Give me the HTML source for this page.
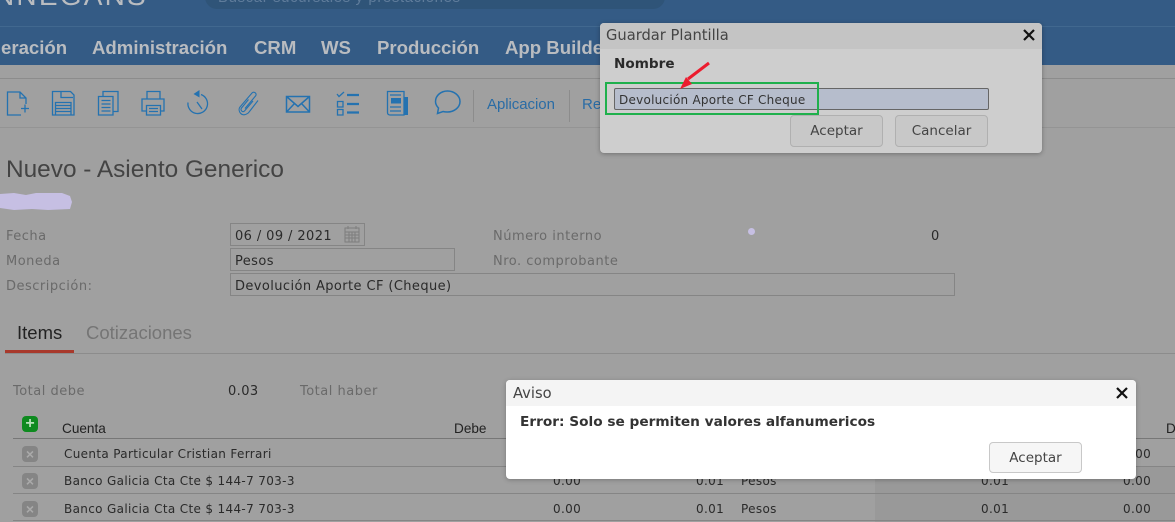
<!DOCTYPE html>
<html lang="es"><head><meta charset="utf-8"><title>Nuevo - Asiento Generico</title>
<style>
html,body{margin:0;padding:0}
html{background:#a0a0a0;overflow:hidden}
body{width:1175px;height:522px;position:relative;overflow:hidden;background:#a0a0a0;font-family:"DejaVu Sans",sans-serif;color:#222;filter:blur(.35px)}
.t{position:absolute;white-space:nowrap;line-height:1}
.l{font-family:"Liberation Sans",sans-serif}
.b{position:absolute;box-sizing:border-box}
.lab{font-size:13px;letter-spacing:.5px;color:#6a6a6a}
.val{font-size:13px;letter-spacing:.4px;color:#2a2a2a}
.nav{font:bold 18.6px "Liberation Sans",sans-serif;color:#b9bcc0;top:37px}
.hl{position:absolute;left:13px;width:1162px;height:1px;background:#858585}
.x{position:absolute;left:22px;width:16px;height:16px;border-radius:4px;background:#858585;color:#aaa;font:bold 14px/16px "Liberation Sans",sans-serif;text-align:center}
.c{font-size:12px;letter-spacing:.34px;color:#2a2a2a}
.btn{position:absolute;box-sizing:border-box;border-radius:4px;text-align:center;font-size:13.5px}
svg{position:absolute;fill:none;stroke:#2472b0;stroke-width:1.3}
</style></head><body>
<div class="b" style="left:0;top:0;width:1175px;height:65px;background:#345b85"></div>
<div class="b" style="left:0;top:26px;width:1175px;height:1px;background:#41688f"></div>
<div class="b" style="left:205px;top:-20px;width:460px;height:29px;border-radius:12px;background:#2f5478"></div>
<div class="t l" style="left:-6px;top:-18px;font-size:28px;letter-spacing:2.2px;color:#b9bcc0">NNEGANS</div>
<div class="t l" style="left:218px;top:-10px;font-size:15px;letter-spacing:.6px;color:#5f7c9b">Buscar sucursales y prestaciones</div>
<div class="t nav" style="left:1px">eración</div>
<div class="t nav" style="left:92px">Administración</div>
<div class="t nav" style="left:254px">CRM</div>
<div class="t nav" style="left:321px">WS</div>
<div class="t nav" style="left:377px">Producción</div>
<div class="t nav" style="left:505px">App Builder</div>
<div class="b" style="left:0;top:78px;width:1175px;height:1px;background:#8c8c8c"></div>
<div class="b" style="left:0;top:127px;width:1175px;height:1px;background:#949494"></div>
<svg style="left:0;top:0" width="480" height="130" viewBox="0 0 480 130">
<path d="M26 104V98l-6-6H7.500v23H21M20 92v6h6M21 108.500h8M25 104.500v8"/>
<path d="M52.500 91.500h18l3.500 3.500v20H52.500zM61 91.500v6h12M55.500 114.500v-12h15.500v12M55.500 105.500h15.500M55.500 108.500h15.500M55.500 111.500h15.500"/>
<path d="M103 96v-4.500h15v20h-5M98.500 96.500h14.500v18.500H98.500zM101.500 100.500h9M101.500 104h9M101.500 107.500h9M101.500 111h9"/>
<path d="M147 99v-7.500h13V99M146 111h-4v-12h22v12h-3M146.500 105.500h14v9.500h-14zM149 108.500h9M149 111.500h9"/>
<path d="M201 94.500a9.800 9.800 0 1 1-13 8M197 102l5 7"/><path d="M199.500 90v7.500l-6-3.500z" fill="#2472b0" stroke="none"/>
<path d="M245 108.500l10.500-12.500c2-2.500-1.500-5-3.500-3l-12 14c-2.500 3 .5 9 5.500 7.500 1.500-.5 3-1.500 4-3l8.500-11M248.500 99.500l-7 8.500c-1.500 2 1 5 3 3l8.500-10" stroke-width="1.1"/>
<path d="M286.500 96.500h23v15.500h-23zM286.500 96.500l11.500 10 11.500-10M286.500 112l8-8.500M309.500 112l-8-8.500" stroke-width="1.5"/>
<path d="M337 94l2 2.500 5-4.500M337.500 101.500h5.500v5.500h-5.500zM337.500 109.500h5.500v5.500h-5.500z"/>
<path d="M347 95h12M347 104h12M347 112.500h12" stroke-width="2.200"/>
<path d="M387.500 91.500h16.500v23.500h-14c-1.500 0-2.500-1-2.500-2.500zM390 95h11M390 107h11M390 111h11"/>
<path d="M391 98h10v5.500h-10zM404 97h4v18h-4z" fill="#2472b0" stroke="none"/>
<path d="M438.500 108c-2-2-3-4-3-6.500 0-6 5.500-10.500 12-10.500s12.500 4.500 12.500 10.500-6 10.500-12.500 10.500c-1.500 0-3 0-4.500-.5l-5.500 2z" stroke-width="1.500"/>
</svg>
<div class="b" style="left:473px;top:90px;width:1px;height:32px;background:#8c8c8c"></div>
<div class="b" style="left:569px;top:90px;width:1px;height:32px;background:#8c8c8c"></div>
<div class="t l" style="left:487px;top:97px;font-size:15px;letter-spacing:-.05px;color:#2a6ca5">Aplicacion</div>
<div class="t l" style="left:582px;top:97px;font-size:15px;color:#2a6ca5">Re</div>

<div class="t l" style="left:6px;top:158px;font-size:24.4px;color:#444">Nuevo - Asiento Generico</div>
<svg style="left:0;top:190px;stroke:none" width="76" height="24"><path d="M0 4l14-1 12 2 10-2 26 0 8 3 2 6-2 7-22 1-16-1-18 1-14-2z" fill="#c6bfe3"/></svg>
<div class="b" style="left:748px;top:228px;width:7px;height:7px;border-radius:50%;background:#c6bfe3"></div>

<div class="t lab" style="left:6px;top:230px">Fecha</div>
<div class="t lab" style="left:6px;top:255px">Moneda</div>
<div class="t lab" style="left:6px;top:280px">Descripción:</div>
<div class="b" style="left:230px;top:223px;width:135px;height:23px;border:1px solid #858585"></div>
<div class="b" style="left:230px;top:248px;width:225px;height:23px;border:1px solid #858585"></div>
<div class="b" style="left:230px;top:273px;width:725px;height:23px;border:1px solid #858585"></div>
<div class="t val" style="left:235px;top:230px">06 / 09 / 2021</div>
<svg style="left:343px;top:225px;stroke:#7d7d7d;stroke-width:1" width="18" height="18"><path d="M2 3h14v14H2zM2 7h14M5 1v3M13 1v3M2 10h14M2 13h14M6 7v10M9 7v10M12 7v10"/></svg>
<div class="t val" style="left:235px;top:255px">Pesos</div>
<div class="t val" style="left:235px;top:280px">Devolución Aporte CF (Cheque)</div>
<div class="t lab" style="left:493px;top:230px">Número interno</div>
<div class="t lab" style="left:493px;top:255px">Nro. comprobante</div>
<div class="t val" style="left:931px;top:230px">0</div>

<div class="t l" style="left:17px;top:324px;font-size:18.5px;color:#222">Items</div>
<div class="t l" style="left:86px;top:324px;font-size:18.5px;color:#757575">Cotizaciones</div>
<div class="b" style="left:5px;top:350px;width:69px;height:3px;background:#a8392c"></div>
<div class="b" style="left:5px;top:353px;width:1170px;height:1px;background:#8c8c8c"></div>

<div class="t lab" style="left:13px;top:385px">Total debe</div>
<div class="t val" style="left:228px;top:385px">0.03</div>
<div class="t lab" style="left:300px;top:385px">Total haber</div>

<div class="b" style="left:22px;top:416px;width:16px;height:16px;border-radius:4px;background:#0e8a1f;color:#b5dfb8;font:bold 16px/15px 'Liberation Sans',sans-serif;text-align:center">+</div>
<div class="t l" style="left:62px;top:422px;font-size:13.6px;color:#222">Cuenta</div>
<div class="t l" style="left:454px;top:422px;font-size:13.6px;color:#222">Debe</div>
<div class="t l" style="left:1166px;top:422px;font-size:13.6px;color:#222">D</div>
<div class="b" style="left:875px;top:466px;width:300px;height:56px;background:#999"></div>
<div class="hl" style="top:438px;height:1px;background:#777"></div>
<div class="hl" style="top:466px"></div>
<div class="hl" style="top:493px"></div>
<div class="hl" style="top:520px"></div>
<div class="x" style="top:446px">×</div>
<div class="x" style="top:473px">×</div>
<div class="x" style="top:501px">×</div>
<div class="t c" style="left:64px;top:448px">Cuenta Particular Cristian Ferrari</div>
<div class="t c" style="left:64px;top:475px">Banco Galicia Cta Cte $ 144-7 703-3</div>
<div class="t c" style="left:64px;top:503px">Banco Galicia Cta Cte $ 144-7 703-3</div>
<div class="t c" style="left:553px;top:475px">0.00</div><div class="t c" style="left:696px;top:475px">0.01</div><div class="t c" style="left:741px;top:475px">Pesos</div><div class="t c" style="left:981px;top:475px">0.01</div><div class="t c" style="left:1123px;top:475px">0.00</div>
<div class="t c" style="left:553px;top:503px">0.00</div><div class="t c" style="left:696px;top:503px">0.01</div><div class="t c" style="left:741px;top:503px">Pesos</div><div class="t c" style="left:981px;top:503px">0.01</div><div class="t c" style="left:1123px;top:503px">0.00</div>
<div class="t c" style="left:1123px;top:448px">0.00</div>

<div class="b" style="left:600px;top:23px;width:442px;height:130px;border-radius:4px;background:#cecece;box-shadow:0 1px 5px rgba(0,0,0,.3)"></div>
<div class="b" style="left:600px;top:23px;width:442px;height:26px;border-radius:4px 4px 0 0;background:#c4c4c4"></div>
<div class="t" style="left:606px;top:29px;font-size:14.7px;color:#444">Guardar Plantilla</div>
<svg style="left:1022px;top:28px;stroke:#111;stroke-width:2.2" width="14" height="14"><path d="M2 2l10 10M12 2L2 12"/></svg>
<div class="t" style="left:614px;top:58px;font-size:13.6px;font-weight:bold;color:#2a2a2a">Nombre</div>
<div class="b" style="left:614px;top:88px;width:375px;height:22px;border:1px solid #666;border-radius:2px;background:#b6bdcc"></div>
<div class="t" style="left:619px;top:94px;font-size:12px;letter-spacing:.25px;color:#333">Devolución Aporte CF Cheque</div>
<div class="b" style="left:605px;top:82px;width:214px;height:33px;border:2px solid #1fb04c"></div>
<svg style="left:678px;top:60px;stroke:#ec1c2e;stroke-width:3" width="34" height="32"><path d="M31 3L10 19"/><path d="M2 29l12-5-6-7z" fill="#ec1c2e" stroke="none"/></svg>
<div class="btn" style="left:790px;top:115px;width:93px;height:32px;line-height:31px;background:#c8c8c8;border:1px solid #b0b0b0;color:#444">Aceptar</div>
<div class="btn" style="left:895px;top:115px;width:93px;height:32px;line-height:31px;background:#c8c8c8;border:1px solid #b0b0b0;color:#444">Cancelar</div>

<div class="b" style="left:506px;top:380px;width:630px;height:99px;border-radius:4px;background:#fff;box-shadow:0 1px 5px rgba(0,0,0,.25)"></div>
<div class="b" style="left:506px;top:380px;width:630px;height:26px;border-radius:4px 4px 0 0;background:#f4f4f4"></div>
<div class="t" style="left:513px;top:387px;font-size:14.7px;color:#444">Aviso</div>
<svg style="left:1115px;top:386px;stroke:#111;stroke-width:2.2" width="14" height="14"><path d="M2 2l10 10M12 2L2 12"/></svg>
<div class="t" style="left:520px;top:416px;font-size:13.7px;font-weight:bold;color:#333">Error: Solo se permiten valores alfanumericos</div>
<div class="btn" style="left:989px;top:442px;width:93px;height:31px;line-height:31px;background:#f6f6f6;border:1px solid #c8c8c8;color:#444">Aceptar</div>
</body></html>
